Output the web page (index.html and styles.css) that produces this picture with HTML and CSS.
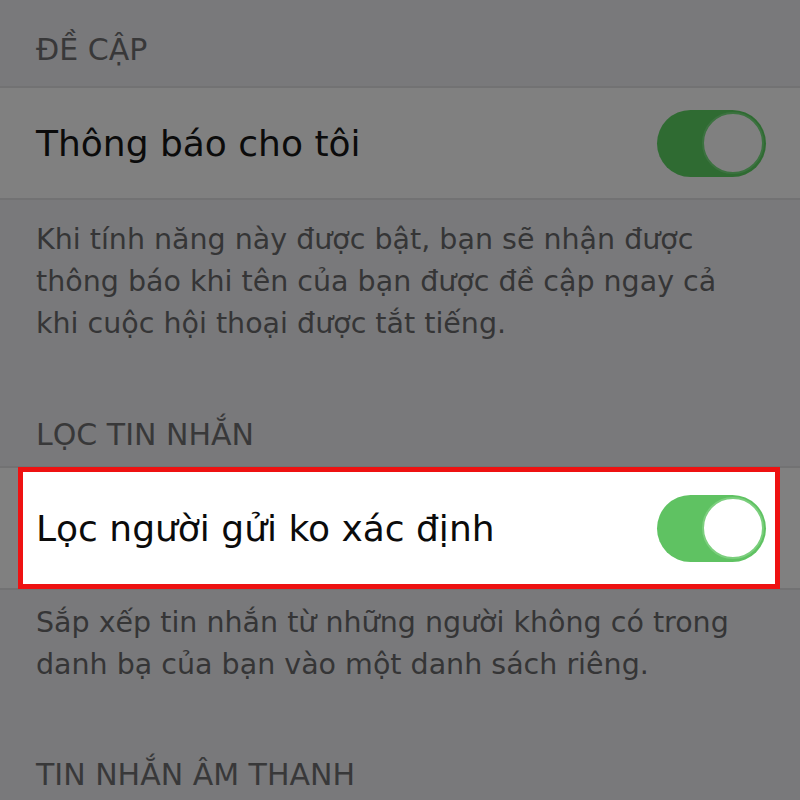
FILE: index.html
```html
<!DOCTYPE html>
<html lang="vi">
<head>
    <meta charset="UTF-8">
    <meta name="viewport" content="width=device-width, initial-scale=1.0">
    <title>Cài đặt tin nhắn</title>
    <link rel="stylesheet" href="styles.css">
</head>
<body>
    <div class="settings">
        <div class="section-title first">ĐỀ CẬP</div>
        <div class="row">
            <span class="row-label">Thông báo cho tôi</span>
            <div class="switch dim"><div class="knob"></div></div>
        </div>
        <p class="section-note">Khi tính năng này được bật, bạn sẽ nhận được thông báo khi tên của bạn được đề cập ngay cả khi cuộc hội thoại được tắt tiếng.</p>

        <div class="section-title second">LỌC TIN NHẮN</div>
        <div class="row tall">
            <div class="highlight">
                <span class="row-label">Lọc người gửi ko xác định</span>
                <div class="switch"><div class="knob"></div></div>
            </div>
        </div>
        <p class="section-note short">Sắp xếp tin nhắn từ những người không có trong danh bạ của bạn vào một danh sách riêng.</p>

        <div class="section-title third">TIN NHẮN ÂM THANH</div>
    </div>
</body>
</html>
```

FILE: styles.css
```css
body {
    margin: 0;
    background-color: #79797b;
    font-family: "DejaVu Sans", "Liberation Sans", sans-serif;
    overflow: hidden;
}

.settings {
    width: 800px;
    height: 800px;
}

.section-title {
    padding: 0 36px;
    font-size: 30px;
    line-height: 40px;
    color: #383839;
}

.section-title.first {
    padding-top: 30px;
    padding-bottom: 16px;
}

.section-title.second {
    padding-top: 70px;
    padding-bottom: 11px;
}

.section-title.third {
    padding-top: 69px;
}

.row {
    height: 114px;
    box-sizing: border-box;
    background-color: #808080;
    border-top: 2px solid #727273;
    border-bottom: 2px solid #727273;
    display: flex;
    align-items: center;
    justify-content: space-between;
    padding: 0 34px 0 36px;
}

.row.tall {
    height: 124px;
    padding: 0 20px 0 18px;
    align-items: stretch;
}

.highlight {
    flex: 1;
    display: flex;
    align-items: center;
    justify-content: space-between;
    background-color: #ffffff;
    border: 5px solid #ee1111;
    padding: 0 9px 0 13px;
    margin: -1px 0;
}

.row-label {
    font-size: 36px;
    color: #0b0b0b;
}

.switch {
    width: 109px;
    height: 67px;
    box-sizing: border-box;
    border-radius: 34px;
    background-color: #5fc262;
    padding: 2px;
    display: flex;
    justify-content: flex-end;
    align-items: center;
}

.knob {
    width: 62px;
    height: 62px;
    border-radius: 50%;
    background-color: #ffffff;
    box-sizing: border-box;
    border: 2px solid #7ccf7e;
}

.switch.dim {
    background-color: #2f6b32;
}

.switch.dim .knob {
    background-color: #808080;
    border-color: #3c7240;
}

.section-note {
    margin: 0;
    padding: 19px 60px 0 36px;
    font-size: 28.5px;
    line-height: 42px;
    color: #353536;
}

.section-note.short {
    padding-top: 12px;
}
```
